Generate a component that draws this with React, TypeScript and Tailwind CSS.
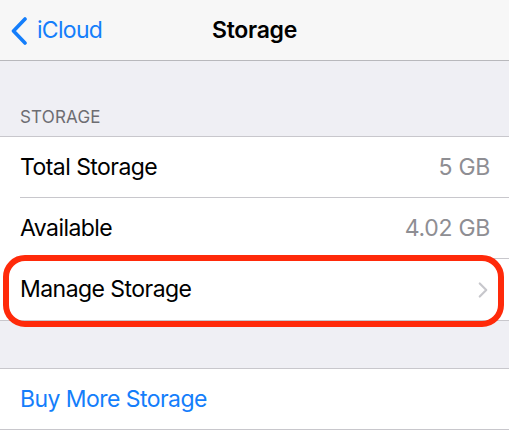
import { ChevronRight } from 'lucide-react';

const font = { fontFamily: 'Inter, "Helvetica Neue", Arial, sans-serif' };

type Row = { label: string; value?: string; chevron?: boolean; last?: boolean };

const rows: Row[] = [
  { label: 'Total Storage', value: '5 GB' },
  { label: 'Available', value: '4.02 GB' },
  { label: 'Manage Storage', chevron: true, last: true },
];

const App = () => {
  return (
    <div className="relative h-[430px] w-[509px] overflow-hidden bg-[#efeff4] antialiased" style={font}>
      {/* nav bar */}
      <header className="relative flex h-[61px] items-center border-b border-[#b8b8bc] bg-[#f7f7f7]">
        <div className="flex items-center pl-[10px] text-[#147efb]">
          <svg width="18" height="28" viewBox="0 0 18 28" fill="none" className="mt-[1px]">
            <path d="M15 2 L3.5 14 L15 26" stroke="currentColor" strokeWidth="3.6" strokeLinecap="round" strokeLinejoin="round" />
          </svg>
          <span className="ml-[9px] text-[23px] tracking-[-0.7px]">iCloud</span>
        </div>
        <h1 className="absolute left-1/2 -translate-x-1/2 text-[23px] font-semibold tracking-[-0.3px] text-black">Storage</h1>
      </header>

      {/* section header */}
      <div className="flex h-[75px] items-end px-5 pb-[6px]">
        <span className="text-[17px] tracking-[0.2px] text-[#6d6d72]">STORAGE</span>
      </div>

      {/* group */}
      <div className="border-t border-[#c8c7cc] bg-white">
        {rows.map((row) => (
          <div key={row.label} className={`pl-5 ${row.last ? 'border-b border-[#c8c7cc]' : ''}`}>
            <div className={`flex h-[61px] items-center justify-between pr-[19px] ${row.last ? '' : 'border-b border-[#c8c7cc]'}`}>
              <span className="text-[23px] tracking-[-0.55px] text-black">{row.label}</span>
              {row.value && <span className="text-[23px] tracking-[-0.3px] text-[#8e8e93]">{row.value}</span>}
              {row.chevron && <ChevronRight className="-mr-[6px] h-[26px] w-[26px] text-[#c7c7cc]" strokeWidth={2} />}
            </div>
          </div>
        ))}
      </div>

      <div className="h-[47px]" />

      <div className="border-y border-[#c8c7cc] bg-white pl-5">
        <div className="flex h-[60px] items-center">
          <span className="text-[23px] tracking-[-0.55px] text-[#147efb]">Buy More Storage</span>
        </div>
      </div>

      {/* red highlight */}
      <div className="pointer-events-none absolute left-[3px] top-[255px] h-[72px] w-[501px] rounded-[22px] border-[6px] border-[#ff2a0a]" />
    </div>
  );
};

export default App;
